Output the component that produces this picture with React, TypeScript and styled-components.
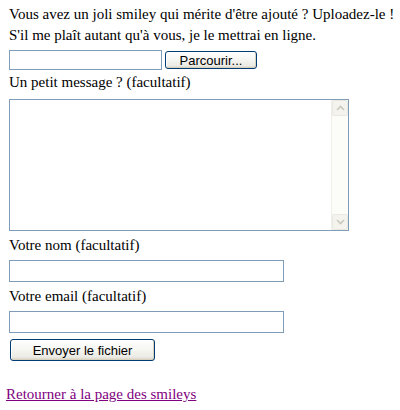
import { createGlobalStyle } from 'styled-components'
import styled from 'styled-components'

const GlobalStyle = createGlobalStyle`
  html, body {
    margin: 0;
    padding: 0;
    background: #ffffff;
  }
  body {
    font-family: "Liberation Serif", "Times New Roman", serif;
    font-size: 15px;
    color: #000000;
  }
`

const Page = styled.div`
  width: 400px;
  height: 410px;
  box-sizing: border-box;
  padding: 4px 0 0 6px;
  display: flex;
  flex-direction: column;
`

const Form = styled.form`
  display: flex;
  flex-direction: column;
  align-items: flex-start;
  padding-left: 3px;
  margin: 0;
`

const Line = styled.div<{ $top?: number }>`
  line-height: 21px;
  height: 21px;
  margin-top: ${(p) => p.$top ?? 0}px;
  white-space: nowrap;
`

const FileRow = styled.div`
  display: flex;
  align-items: center;
  gap: 3px;
  margin-top: 4px;
`

const FileInput = styled.div`
  width: 153px;
  height: 20px;
  box-sizing: border-box;
  border: 1px solid #7f9db9;
  background: #ffffff;
`

const XpButton = styled.button<{ $w: number; $h: number }>`
  width: ${(p) => p.$w}px;
  height: ${(p) => p.$h}px;
  box-sizing: border-box;
  border: 1px solid #003c74;
  border-radius: 3px;
  background: linear-gradient(to bottom, #ffffff 0%, #f6f6f3 45%, #ecebe4 85%, #d6d0c5 100%);
  box-shadow: inset -1px -1px 0 #d8d2bd, inset 1px 1px 0 #ffffff;
  font-family: "Liberation Sans", Arial, sans-serif;
  font-size: 13px;
  color: #000000;
  padding: 0;
  margin: 0;
  line-height: 1;
`

const TextBox = styled.div`
  display: flex;
  width: 340px;
  height: 132px;
  box-sizing: border-box;
  border: 1px solid #7f9db9;
  background: #ffffff;
  margin-top: 6px;
`

const TextArea = styled.textarea`
  flex: 1;
  border: none;
  outline: none;
  resize: none;
  padding: 0;
  margin: 0;
  background: transparent;
`

const ScrollBar = styled.div`
  width: 16px;
  display: flex;
  flex-direction: column;
  justify-content: space-between;
  background: #fcfcf9;
  border-left: 1px solid #f0efe9;
`

const ScrollArrow = styled.div`
  width: 16px;
  height: 16px;
  box-sizing: border-box;
  border: 1px solid #e9e8e1;
  border-radius: 2px;
  background: #f4f3ee;
  display: flex;
  align-items: center;
  justify-content: center;
`

const TextField = styled.div`
  width: 275px;
  height: 22px;
  box-sizing: border-box;
  border: 1px solid #7f9db9;
  background: #ffffff;
  margin-top: 4px;
`

const SubmitWrap = styled.div`
  margin: 6px 0 0 1px;
`

const BackLink = styled.a`
  color: #800080;
  text-decoration: underline;
  line-height: 21px;
  margin-top: 23px;
  align-self: flex-start;
`

const Chevron = ({ up }: { up?: boolean }) => (
  <svg width="9" height="6" viewBox="0 0 9 6">
    <path
      d={up ? 'M1 5 L4.5 1.5 L8 5' : 'M1 1 L4.5 4.5 L8 1'}
      fill="none"
      stroke="#c9c8bd"
      strokeWidth="1.6"
    />
  </svg>
)

export default function App() {
  return (
    <Page>
      <GlobalStyle />
      <Form onSubmit={(e) => e.preventDefault()}>
        <Line>Vous avez un joli smiley qui mérite d'être ajouté ? Uploadez-le !</Line>
        <Line>S'il me plaît autant qu'à vous, je le mettrai en ligne.</Line>
        <FileRow>
          <FileInput />
          <XpButton type="button" $w={92} $h={18}>
            Parcourir...
          </XpButton>
        </FileRow>
        <Line $top={2}>Un petit message ? (facultatif)</Line>
        <TextBox>
          <TextArea />
          <ScrollBar>
            <ScrollArrow>
              <Chevron up />
            </ScrollArrow>
            <ScrollArrow>
              <Chevron />
            </ScrollArrow>
          </ScrollBar>
        </TextBox>
        <Line $top={4}>Votre nom (facultatif)</Line>
        <TextField />
        <Line $top={4}>Votre email (facultatif)</Line>
        <TextField />
        <SubmitWrap>
          <XpButton type="submit" $w={145} $h={22}>
            Envoyer le fichier
          </XpButton>
        </SubmitWrap>
      </Form>
      <BackLink href="#">Retourner à la page des smileys</BackLink>
    </Page>
  )
}
